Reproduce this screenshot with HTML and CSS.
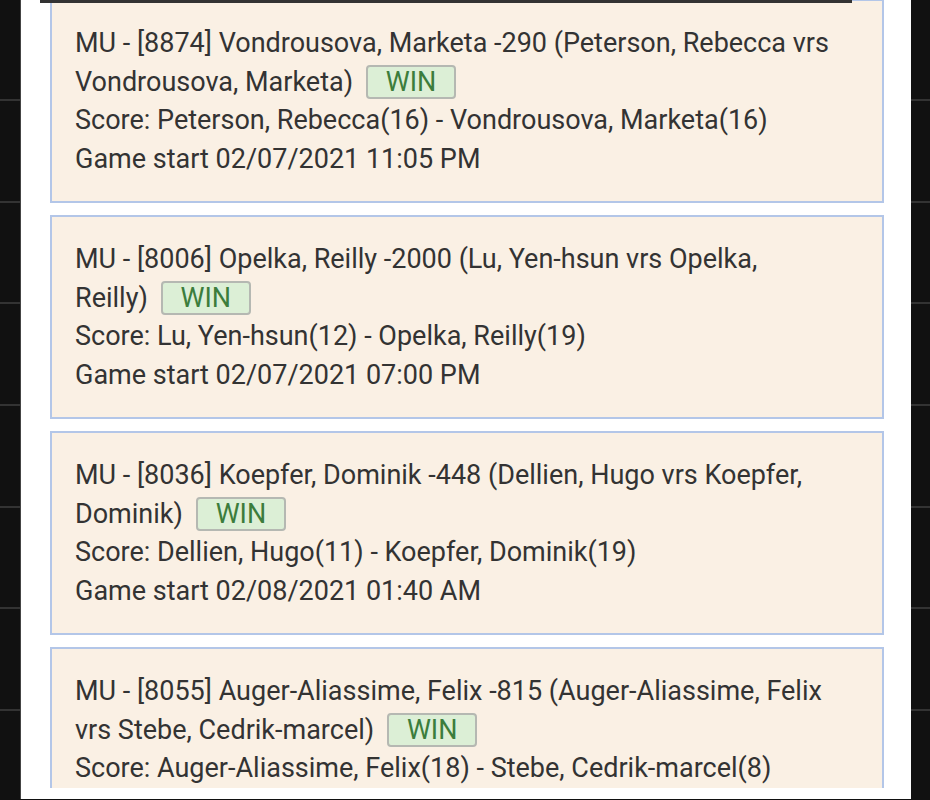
FILE: index.html
```html
<!DOCTYPE html>
<html lang="en">
<head>
  <meta charset="UTF-8">
  <title>Bet Results</title>
  <link rel="stylesheet" href="styles.css">
</head>
<body>
  <div class="panel">
    <div class="header-edge"></div>
    <div class="results">
      <div class="card">
        MU - [8874] Vondrousova, Marketa -290 (Peterson, Rebecca vrs Vondrousova, Marketa) <span class="badge">WIN</span><br>
        Score: Peterson, Rebecca(16) - Vondrousova, Marketa(16)<br>
        Game start 02/07/2021 11:05 PM
      </div>
      <div class="card">
        MU - [8006] Opelka, Reilly -2000 (Lu, Yen-hsun vrs Opelka, Reilly) <span class="badge">WIN</span><br>
        Score: Lu, Yen-hsun(12) - Opelka, Reilly(19)<br>
        Game start 02/07/2021 07:00 PM
      </div>
      <div class="card">
        MU - [8036] Koepfer, Dominik -448 (Dellien, Hugo vrs Koepfer, Dominik) <span class="badge">WIN</span><br>
        Score: Dellien, Hugo(11) - Koepfer, Dominik(19)<br>
        Game start 02/08/2021 01:40 AM
      </div>
      <div class="card">
        MU - [8055] Auger-Aliassime, Felix -815 (Auger-Aliassime, Felix vrs Stebe, Cedrik-marcel) <span class="badge">WIN</span><br>
        Score: Auger-Aliassime, Felix(18) - Stebe, Cedrik-marcel(8)
      </div>
    </div>
  </div>
</body>
</html>
```

FILE: styles.css
```css
body { margin: 0; height: 800px; overflow: hidden; background-color: #111; background-image: repeating-linear-gradient(to bottom, transparent 0, transparent 99px, #333 99px, #333 101px, transparent 101px, transparent 101.67px); font-family: Roboto, "Liberation Sans", sans-serif; }
.panel { position: relative; margin: 0 19px 0 20px; height: 800px; background-color: #fff; border-left: 1px solid #444; }
.header-edge { position: absolute; top: 0; left: 19px; width: 812px; height: 4px; background-color: #333; z-index: 2; }
.results { margin-top: -1px; padding: 0 27px 0 29px; height: 789px; overflow: hidden; }
.card { background-color: #faf0e4; border: 2px solid #b3c6e8; padding: 23px 50px 23px 23px; margin-bottom: 12px; font-size: 27px; line-height: 38.5px; color: #333; }
.badge { display: inline-block; margin-left: 6px; padding: 0 18px; height: 30px; line-height: 30px; border: 2px solid #b5b8b2; border-radius: 4px; background-color: #dcefd6; color: #3c7d3c; vertical-align: middle; position: relative; top: -1px; }
```
